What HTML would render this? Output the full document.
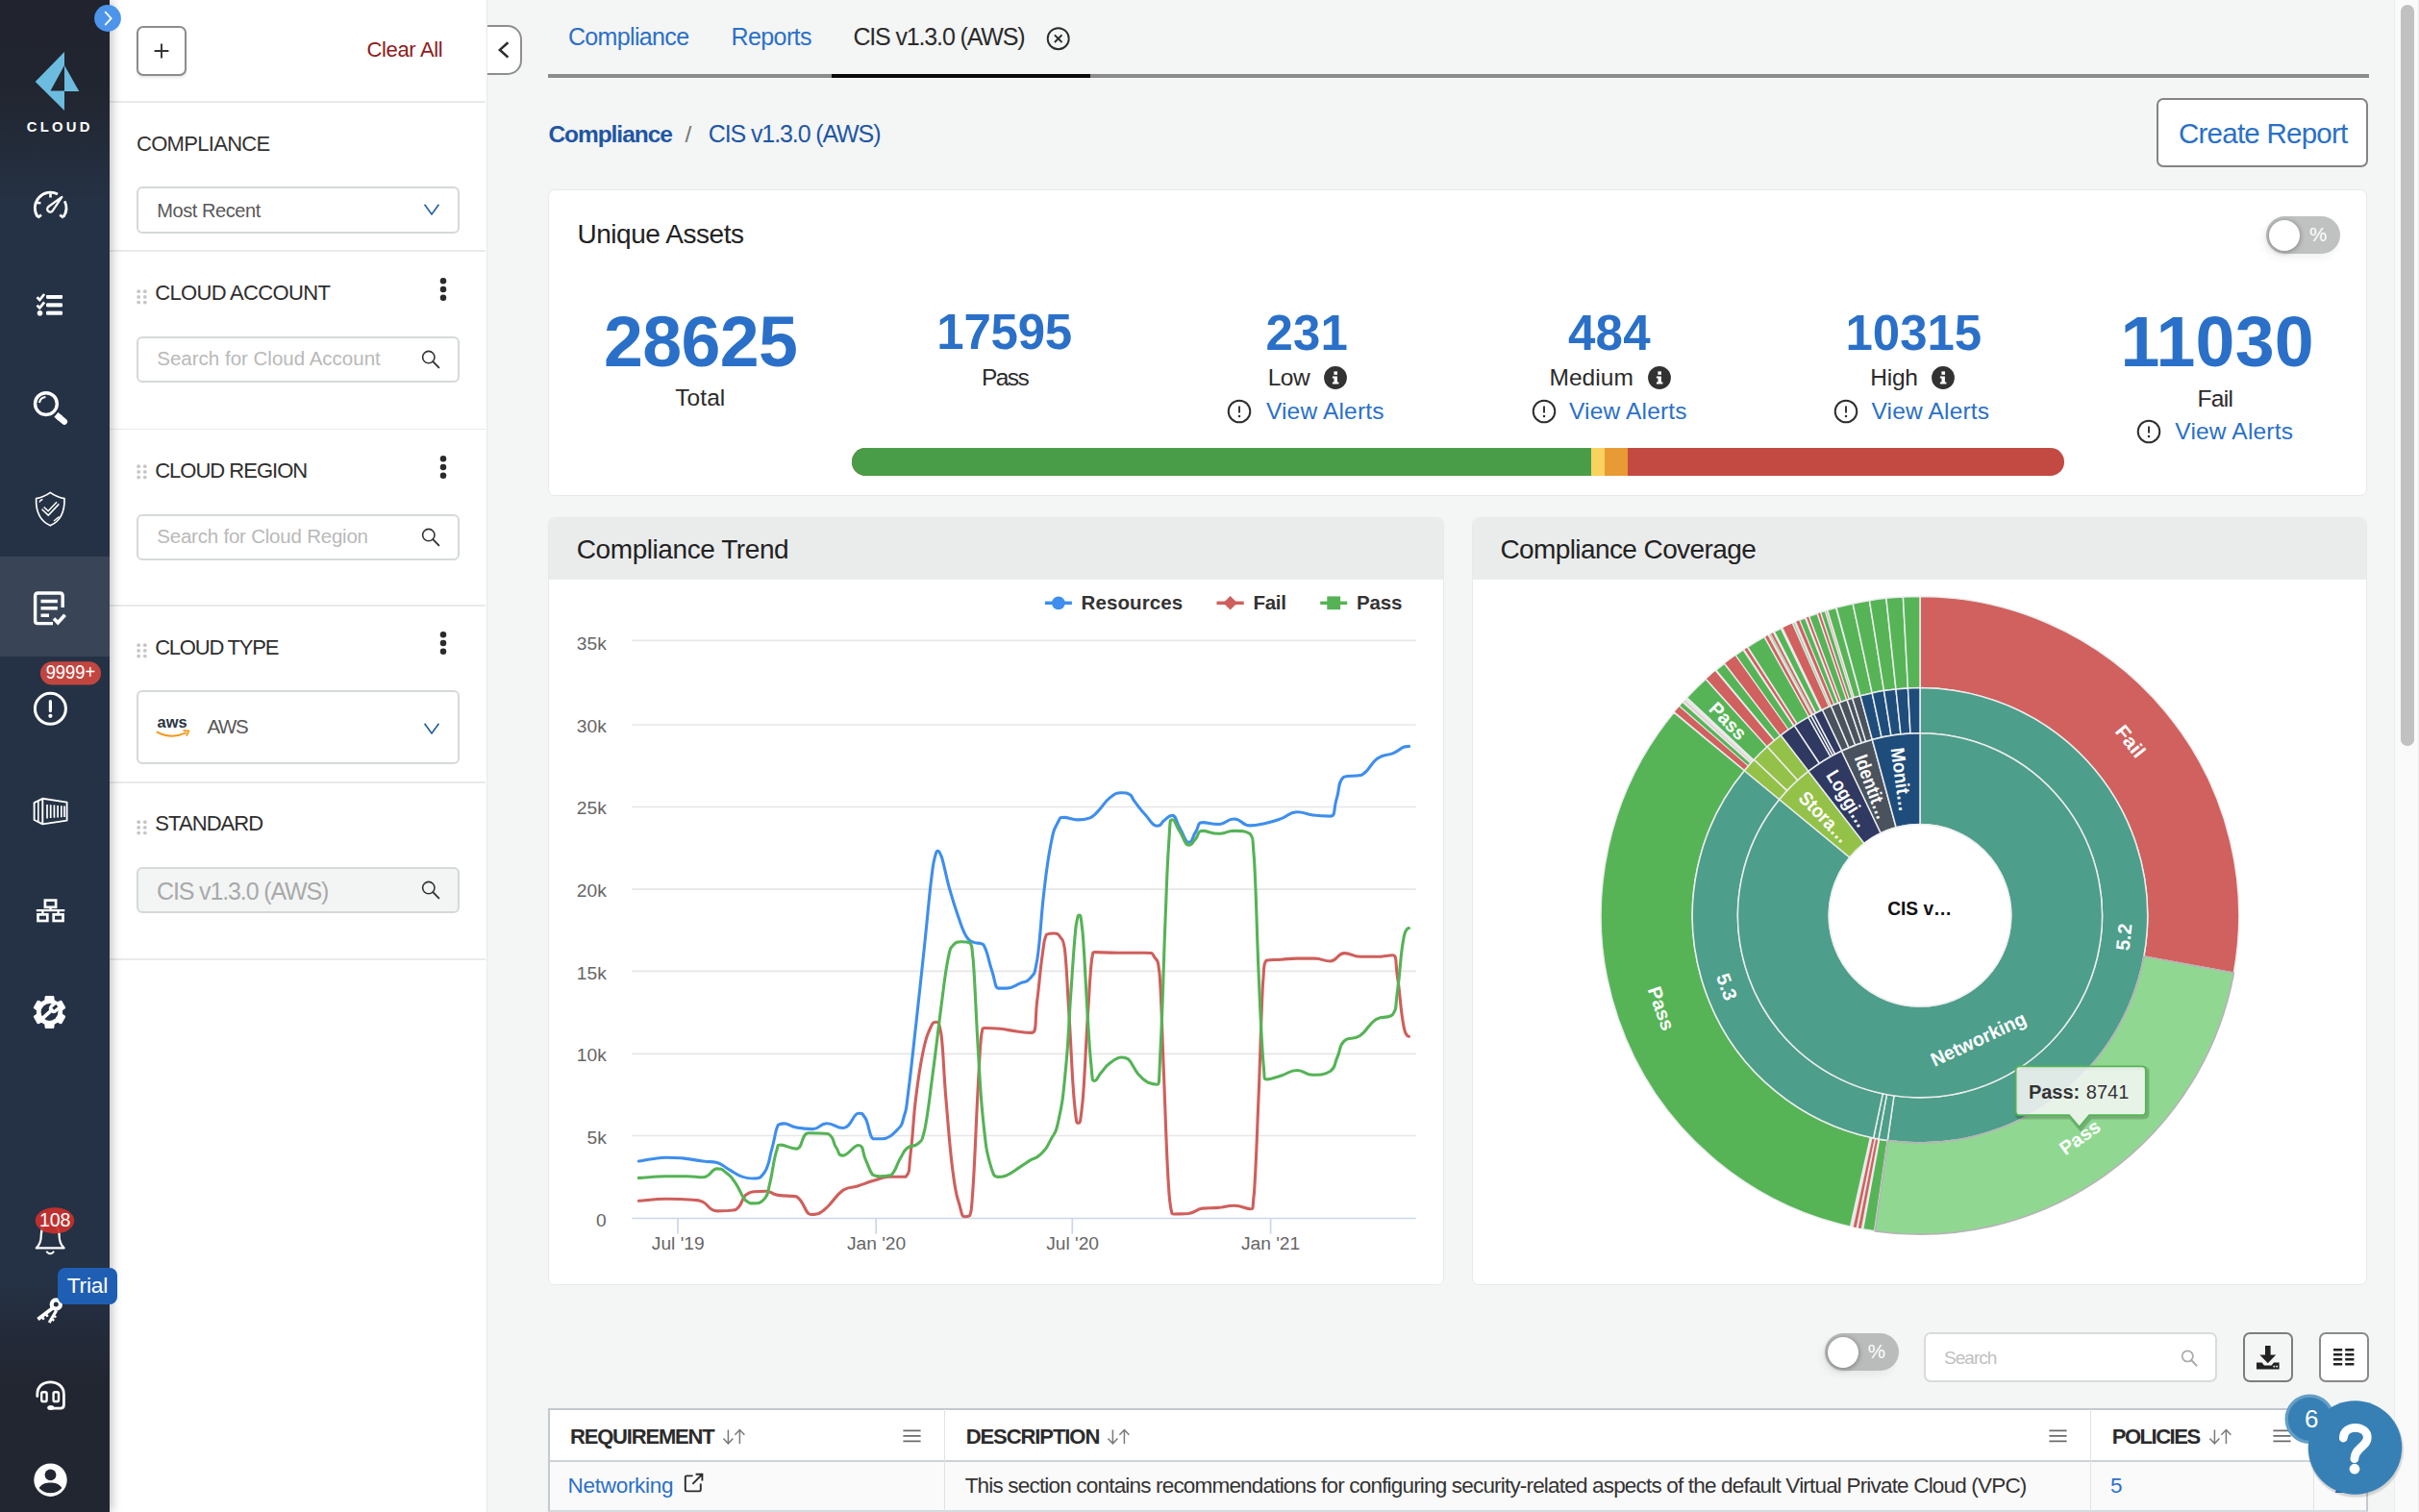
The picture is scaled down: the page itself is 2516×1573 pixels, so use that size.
<!DOCTYPE html>
<html><head><meta charset="utf-8"><title>Compliance</title>
<style>
html,body{margin:0;padding:0;}
body{width:2516px;height:1573px;overflow:hidden;background:#f4f5f5;font-family:"Liberation Sans",sans-serif;position:relative;}
#root{position:absolute;left:0;top:0;width:2516px;height:1573px;overflow:hidden;}
</style></head><body><div id="root">
<div style="position:absolute;left:0.00px;top:0.00px;width:113.60px;height:1573.00px;box-sizing:border-box;background:linear-gradient(180deg,#21242e 0px,#21252f 90px,#253245 215px,#253245 1330px,#232a39 1390px,#222631 1440px,#222631 100%);box-shadow:2px 0 10px rgba(0,0,0,0.27);z-index:5;"></div>
<div style="position:absolute;left:0.00px;top:578.50px;width:113.60px;height:104.50px;box-sizing:border-box;background:#394557;z-index:6;"></div>
<svg style="position:absolute;left:0.00px;top:0.00px;z-index:7;overflow:visible;" width="130" height="1573" viewBox="0 0 130 1573"><polygon points="67,54 36.7,85 67,115" fill="#6cbce0"/><polygon points="67,68 52.5,94.5 67,94.5" fill="#22262f"/><polygon points="67,68 82.3,95 67,95" fill="#6cbce0"/><text x="62.2" y="136.9" font-family="Liberation Sans, sans-serif" font-weight="bold" font-size="14.8" fill="#fff" text-anchor="middle" letter-spacing="3.3" textLength="69" lengthAdjust="spacing">CLOUD</text><g fill="none" stroke="#fff" stroke-width="2.8">
<path d="M39.25,225.75 A16.3,16.3 0 0 1 60.0,201.88"/>
<path d="M67.25,209.26 A16.3,16.3 0 0 1 65.95,225.75"/>
<path d="M39.2,226.4 L43,223.7 M66,226.4 L62.2,223.7" stroke-width="2.7"/>
<path d="M52.5,201.3 V205.5 M37.6,210.7 L42.4,211.2" stroke-width="2.6"/>
</g>
<path d="M64.4,204.9 L54.5,219.6 A3,3 0 1 1 50.1,215.2 Z" fill="none" stroke="#fff" stroke-width="2.3" stroke-linejoin="round"/><g stroke="#fff" stroke-width="3.8" fill="none" stroke-linecap="round">
<path d="M49.8,308.8 H63.3 M49.8,317.3 H63.3 M49.8,325.7 H63.3"/>
</g>
<path d="M48.3,306.9 H64.9 V310.7 H48.3 Z M48.3,315.4 H64.9 V319.2 H48.3 Z M48.3,323.8 H64.9 V327.6 H48.3 Z" fill="#fff" fill-opacity="0.85"/>
<g stroke="#fff" stroke-width="2.7" fill="none"><path d="M38.5,309.2 L41.3,312 L46.1,306 M38.5,317.6 L41.3,320.4 L46.1,314.4"/></g>
<circle cx="41.5" cy="325.7" r="2.8" fill="#fff"/><circle cx="47.9" cy="420.1" r="11.4" fill="none" stroke="#fff" stroke-width="3.4"/>
<path d="M58.4,431.3 L63,435.3" stroke="#fff" stroke-width="6.3"/>
<path d="M61.6,434.1 L66.9,438.7" stroke="#fff" stroke-width="6.3" stroke-linecap="round"/>
<path d="M41,419 A7.2,7.2 0 0 1 47.4,413" fill="none" stroke="#fff" stroke-width="2.1"/><path d="M52.3,512.4 C47,516.4 42.5,517.8 37.6,518.6 C37.2,531 40.5,541.5 52.3,546.8 C64.1,541.5 67.4,531 67,518.6 C62.1,517.8 57.6,516.4 52.3,512.4 Z" fill="none" stroke="#fff" stroke-width="1.7" stroke-linejoin="round"/>
<path d="M44.6,528.6 l5.6,5.3 l10,-10.6" fill="none" stroke="#fff" stroke-width="4.6" stroke-linejoin="miter"/>
<path d="M44.6,528.6 l5.6,5.3 l10,-10.6" fill="none" stroke="#253245" stroke-width="1.6"/>
<path d="M41,522.5 q0.5,-2.2 3.4,-3 M56,542 l5.5,-4.6" stroke="#fff" stroke-width="1.3" fill="none"/><path d="M55,648.6 H39.5 Q36.6,648.6 36.6,645.7 V620 Q36.6,617 39.5,617 H62.3 Q65.2,617 65.2,620 V632" fill="none" stroke="#fff" stroke-width="3.4"/>
<path d="M42.5,625.5 H59.8 M42.5,632.8 H59.8 M42.5,640.2 H51" stroke="#fff" stroke-width="3.6" fill="none"/>
<path d="M56,643.6 l4.2,4.2 l7.4,-8" fill="none" stroke="#fff" stroke-width="3.6"/><circle cx="52.4" cy="737.3" r="16" fill="none" stroke="#fff" stroke-width="3"/>
<path d="M52.4,729.6 V739.6" stroke="#fff" stroke-width="3.2" stroke-linecap="round"/><circle cx="52.4" cy="744.8" r="2.1" fill="#fff"/><rect x="42" y="688.2" width="63" height="24.4" rx="12.2" fill="#c2463f"/><text x="73.4" y="706.0" font-family="Liberation Sans, sans-serif" font-size="20" fill="#fff" text-anchor="middle" textLength="51.5" lengthAdjust="spacingAndGlyphs">9999+</text><g fill="none" stroke="#fff" stroke-width="1.9" stroke-linejoin="round">
<path d="M44.3,830.8 L69.6,834.6 V853.6 L44.3,857.4 L35.6,853 V835.2 Z"/>
<path d="M44.3,830.8 V857.4"/>
<path d="M39.8,833.6 V855.2" stroke-width="1.6"/>
<path d="M49,837 V851.4 M52.7,837.3 V851.1 M56.4,837.6 V850.8 M60.1,837.9 V850.5 M63.8,838.2 V850.2 M67,838.5 V849.9" stroke-width="1.7"/>
</g><g fill="none" stroke="#fff" stroke-width="2.7">
<rect x="46.9" y="936.6" width="11.2" height="7.2"/>
<rect x="39.5" y="951.4" width="9.8" height="6.6"/>
<rect x="55.7" y="951.4" width="9.8" height="6.6"/>
<path d="M52.5,944 V947.2 M37.8,947.2 H67.3" stroke-width="2.3"/>
<path d="M44.4,947.2 V950.6 M60.6,947.2 V950.6" stroke-width="2.3"/>
</g><path d="M47.86,1037.22 L55.14,1037.22 L55.60,1041.09 L59.77,1043.49 L63.35,1041.95 L66.99,1048.26 L63.87,1050.60 L63.87,1055.40 L66.99,1057.74 L63.35,1064.05 L59.77,1062.51 L55.60,1064.91 L55.14,1068.78 L47.86,1068.78 L47.40,1064.91 L43.23,1062.51 L39.65,1064.05 L36.01,1057.74 L39.13,1055.40 L39.13,1050.60 L36.01,1048.26 L39.65,1041.95 L43.23,1043.49 L47.40,1041.09 Z" fill="#fff" stroke="#fff" stroke-width="2.4" stroke-linejoin="round"/><circle cx="51.5" cy="1053.0" r="8.9" fill="#253245"/><g transform="rotate(48 51.5 1053.0)"><path d="M49.6,1063.0 V1051.8 A5,5 0 1 1 53.4,1051.8 V1063.0 Z" fill="#fff"/>
<rect x="50.0" y="1042.6" width="3" height="5.4" fill="#253245"/></g><g transform="translate(0,-4.4)"><path d="M37.8,1302.8 H66.6 C63,1299.6 61.6,1296 61.6,1289.5 C61.6,1281.6 57.8,1276.8 52.2,1276.8 C46.6,1276.8 42.8,1281.6 42.8,1289.5 C42.8,1296 41.4,1299.6 37.8,1302.8 Z" fill="none" stroke="#fff" stroke-width="2.2" stroke-linejoin="round"/>
<path d="M48.2,1306.3 Q52.2,1311 56.2,1306.3" fill="none" stroke="#fff" stroke-width="2"/></g><ellipse cx="57" cy="1269.8" rx="20.2" ry="13.6" fill="#c9302c" fill-opacity="0.93"/><text x="57.2" y="1275.9" font-family="Liberation Sans, sans-serif" font-size="21" fill="#fff" text-anchor="middle" textLength="32.6" lengthAdjust="spacingAndGlyphs">108</text><g fill="none" stroke="#fff">
<circle cx="58.3" cy="1357" r="4.6" stroke-width="4.2"/>
<path d="M54.2,1361.2 L39.4,1372.4" stroke-width="3.8"/>
<path d="M43.5,1369.8 l2.2,3 M47.5,1366.7 l2.2,3" stroke-width="2.6"/>
<path d="M58.6,1363.5 L51.2,1376" stroke-width="3.2"/>
<path d="M53.6,1372.2 l2.8,1.6 M55.6,1368.8 l2.8,1.6" stroke-width="2.2"/>
</g><g fill="none" stroke="#fff" stroke-width="2.8" stroke-linecap="round" stroke-linejoin="round">
<path d="M38.8,1452.5 V1450.4 C38.8,1442.4 44.7,1437.8 52.3,1437.8 C59.9,1437.8 66.4,1442.4 66.4,1450.4 V1461.6 Q66.4,1465.2 62.8,1465.2 H55.5"/>
<rect x="43.2" y="1448.2" width="5.4" height="9.8" rx="1.6" stroke-width="2.4"/>
<rect x="55.6" y="1448.2" width="5.4" height="9.8" rx="1.6" stroke-width="2.4"/>
</g><ellipse cx="52.8" cy="1464.6" rx="3.6" ry="2.5" fill="#fff"/><circle cx="52.5" cy="1539.7" r="17.2" fill="#fff"/>
<circle cx="52.5" cy="1534.3" r="5.9" fill="#222631"/>
<path d="M40.6,1547.9 C43.5,1543.2 48,1542.4 52.5,1542.4 C57,1542.4 61.5,1543.2 64.4,1547.9 C61.4,1551.4 57.3,1553.2 52.5,1553.2 C47.7,1553.2 43.6,1551.4 40.6,1547.9 Z" fill="#222631"/></svg>
<div style="position:absolute;left:59.50px;top:1319.30px;width:62.50px;height:38.20px;box-sizing:border-box;background:#1f5fb3;border-radius:8px;z-index:8;"></div>
<div style="position:absolute;top:1325.50px;font-size:22.8px;line-height:22.8px;color:#fff;white-space:nowrap;letter-spacing:-0.197px;left:69.65px;z-index:9;">Trial</div>
<svg style="position:absolute;left:97.00px;top:4.00px;z-index:9;" width="30" height="30" viewBox="0 0 30 30"><circle cx="15" cy="15" r="13.9" fill="#4c95ea"/><path d="M12.2,8.2 L18.6,15.2 L12.2,22.2" fill="none" stroke="#fff" stroke-width="1.8"/></svg>
<div style="position:absolute;left:114.00px;top:0.00px;width:392.90px;height:1573.00px;box-sizing:border-box;background:#fff;border-right:1.9px solid #e7e9e9;z-index:1;"></div>
<div style="position:absolute;left:114.00px;top:105.10px;width:391.00px;height:1.80px;box-sizing:border-box;background:#e9ebeb;z-index:2;"></div>
<div style="position:absolute;left:114.00px;top:260.40px;width:391.00px;height:1.80px;box-sizing:border-box;background:#e9ebeb;z-index:2;"></div>
<div style="position:absolute;left:114.00px;top:445.60px;width:391.00px;height:1.80px;box-sizing:border-box;background:#e9ebeb;z-index:2;"></div>
<div style="position:absolute;left:114.00px;top:628.80px;width:391.00px;height:1.80px;box-sizing:border-box;background:#e9ebeb;z-index:2;"></div>
<div style="position:absolute;left:114.00px;top:813.00px;width:391.00px;height:1.80px;box-sizing:border-box;background:#e9ebeb;z-index:2;"></div>
<div style="position:absolute;left:114.00px;top:997.10px;width:391.00px;height:1.80px;box-sizing:border-box;background:#e9ebeb;z-index:2;"></div>
<div style="position:absolute;left:141.90px;top:26.50px;width:51.80px;height:52.00px;box-sizing:border-box;border:2px solid #8c8c8c;border-radius:7px;background:#fff;box-shadow:0 2px 3px rgba(0,0,0,0.10);z-index:3;"></div>
<svg style="position:absolute;left:160.00px;top:45.00px;z-index:3;" width="16" height="16" viewBox="0 0 16 16"><path d="M8,0.6 V15.4 M0.6,8 H15.4" stroke="#333" stroke-width="1.9"/></svg>
<div style="position:absolute;top:40.90px;font-size:22px;line-height:22px;color:#8e1b1b;white-space:nowrap;letter-spacing:-0.325px;left:381.40px;z-index:3;">Clear All</div>
<div style="position:absolute;top:138.50px;font-size:22px;line-height:22px;color:#333;white-space:nowrap;letter-spacing:-0.697px;left:142.00px;z-index:3;">COMPLIANCE</div>
<div style="position:absolute;left:141.80px;top:194.30px;width:336.70px;height:48.40px;box-sizing:border-box;border:2px solid #d5d9d9;border-radius:6px;background:#fff;z-index:3;"></div>
<div style="position:absolute;top:208.60px;font-size:20px;line-height:20px;color:#585858;white-space:nowrap;letter-spacing:-0.424px;left:163.30px;z-index:3;">Most Recent</div>
<svg style="position:absolute;left:440.20px;top:211.40px;z-index:3;" width="18" height="14" viewBox="0 0 18 14"><path d="M1.6,1.8 L9,12 L16.4,1.8" fill="none" stroke="#1f5aa8" stroke-width="1.6"/></svg>
<svg style="position:absolute;left:141.60px;top:300.60px;z-index:3;" width="12" height="16" viewBox="0 0 12 16"><circle cx="2.2" cy="2.2" r="1.9" fill="#c6c6c6"/><circle cx="2.2" cy="7.9" r="1.9" fill="#c6c6c6"/><circle cx="2.2" cy="13.600000000000001" r="1.9" fill="#c6c6c6"/><circle cx="8.8" cy="2.2" r="1.9" fill="#c6c6c6"/><circle cx="8.8" cy="7.9" r="1.9" fill="#c6c6c6"/><circle cx="8.8" cy="13.600000000000001" r="1.9" fill="#c6c6c6"/></svg>
<div style="position:absolute;top:294.10px;font-size:22px;line-height:22px;color:#2e2e2e;white-space:nowrap;letter-spacing:-0.668px;left:161.20px;z-index:3;">CLOUD ACCOUNT</div>
<svg style="position:absolute;left:456.20px;top:286.70px;z-index:3;" width="10" height="28" viewBox="0 0 10 28"><circle cx="5" cy="5.2" r="3.25" fill="#2b2b2b"/><circle cx="5" cy="14" r="3.25" fill="#2b2b2b"/><circle cx="5" cy="22.8" r="3.25" fill="#2b2b2b"/></svg>
<div style="position:absolute;left:141.80px;top:349.90px;width:336.70px;height:48.20px;box-sizing:border-box;border:2px solid #d5d9d9;border-radius:6px;background:#fff;z-index:3;"></div>
<div style="position:absolute;top:363.35px;font-size:20.5px;line-height:20.5px;color:#b9b9b9;white-space:nowrap;left:163.30px;z-index:3;">Search for Cloud Account</div>
<svg style="position:absolute;left:436.50px;top:362.60px;z-index:3;" width="22" height="22" viewBox="0 0 22 22"><circle cx="8.8" cy="8.6" r="6.2" fill="none" stroke="#333" stroke-width="1.6"/><path d="M13.3,13.2 L19.4,19.4" stroke="#333" stroke-width="1.9" stroke-linecap="round"/></svg>
<svg style="position:absolute;left:141.60px;top:483.00px;z-index:3;" width="12" height="16" viewBox="0 0 12 16"><circle cx="2.2" cy="2.2" r="1.9" fill="#c6c6c6"/><circle cx="2.2" cy="7.9" r="1.9" fill="#c6c6c6"/><circle cx="2.2" cy="13.600000000000001" r="1.9" fill="#c6c6c6"/><circle cx="8.8" cy="2.2" r="1.9" fill="#c6c6c6"/><circle cx="8.8" cy="7.9" r="1.9" fill="#c6c6c6"/><circle cx="8.8" cy="13.600000000000001" r="1.9" fill="#c6c6c6"/></svg>
<div style="position:absolute;top:479.30px;font-size:22px;line-height:22px;color:#2e2e2e;white-space:nowrap;letter-spacing:-0.993px;left:161.20px;z-index:3;">CLOUD REGION</div>
<svg style="position:absolute;left:456.20px;top:471.70px;z-index:3;" width="10" height="28" viewBox="0 0 10 28"><circle cx="5" cy="5.2" r="3.25" fill="#2b2b2b"/><circle cx="5" cy="14" r="3.25" fill="#2b2b2b"/><circle cx="5" cy="22.8" r="3.25" fill="#2b2b2b"/></svg>
<div style="position:absolute;left:141.80px;top:535.10px;width:336.70px;height:48.40px;box-sizing:border-box;border:2px solid #d5d9d9;border-radius:6px;background:#fff;z-index:3;"></div>
<div style="position:absolute;top:548.45px;font-size:20.5px;line-height:20.5px;color:#b9b9b9;white-space:nowrap;letter-spacing:-0.217px;left:163.30px;z-index:3;">Search for Cloud Region</div>
<svg style="position:absolute;left:436.50px;top:547.70px;z-index:3;" width="22" height="22" viewBox="0 0 22 22"><circle cx="8.8" cy="8.6" r="6.2" fill="none" stroke="#333" stroke-width="1.6"/><path d="M13.3,13.2 L19.4,19.4" stroke="#333" stroke-width="1.9" stroke-linecap="round"/></svg>
<svg style="position:absolute;left:141.60px;top:669.20px;z-index:3;" width="12" height="16" viewBox="0 0 12 16"><circle cx="2.2" cy="2.2" r="1.9" fill="#c6c6c6"/><circle cx="2.2" cy="7.9" r="1.9" fill="#c6c6c6"/><circle cx="2.2" cy="13.600000000000001" r="1.9" fill="#c6c6c6"/><circle cx="8.8" cy="2.2" r="1.9" fill="#c6c6c6"/><circle cx="8.8" cy="7.9" r="1.9" fill="#c6c6c6"/><circle cx="8.8" cy="13.600000000000001" r="1.9" fill="#c6c6c6"/></svg>
<div style="position:absolute;top:662.70px;font-size:22px;line-height:22px;color:#2e2e2e;white-space:nowrap;letter-spacing:-1.219px;left:161.20px;z-index:3;">CLOUD TYPE</div>
<svg style="position:absolute;left:456.20px;top:655.40px;z-index:3;" width="10" height="28" viewBox="0 0 10 28"><circle cx="5" cy="5.2" r="3.25" fill="#2b2b2b"/><circle cx="5" cy="14" r="3.25" fill="#2b2b2b"/><circle cx="5" cy="22.8" r="3.25" fill="#2b2b2b"/></svg>
<div style="position:absolute;left:141.80px;top:718.40px;width:336.70px;height:76.40px;box-sizing:border-box;border:2px solid #d5d9d9;border-radius:6px;background:#fff;z-index:3;"></div>
<svg style="position:absolute;left:160.00px;top:742.00px;z-index:3;" width="42" height="28" viewBox="0 0 42 28"><text x="3.6" y="14.6" font-family="Liberation Sans, sans-serif" font-weight="bold" font-size="16.6" fill="#2b3442" textLength="31" lengthAdjust="spacingAndGlyphs">aws</text><path d="M3.6,19.6 Q18,27.6 33.2,20.4" fill="none" stroke="#f39a1f" stroke-width="2" stroke-linecap="round"/><path d="M31.2,18.2 L36.6,18.4 L34.2,23" fill="none" stroke="#f39a1f" stroke-width="1.7" stroke-linejoin="round" stroke-linecap="round"/></svg>
<div style="position:absolute;top:746.05px;font-size:20.5px;line-height:20.5px;color:#585858;white-space:nowrap;letter-spacing:-1.379px;left:215.40px;z-index:3;">AWS</div>
<svg style="position:absolute;left:440.30px;top:750.90px;z-index:3;" width="18" height="14" viewBox="0 0 18 14"><path d="M1.6,1.8 L9,12 L16.4,1.8" fill="none" stroke="#1f5aa8" stroke-width="1.6"/></svg>
<svg style="position:absolute;left:141.60px;top:852.80px;z-index:3;" width="12" height="16" viewBox="0 0 12 16"><circle cx="2.2" cy="2.2" r="1.9" fill="#c6c6c6"/><circle cx="2.2" cy="7.9" r="1.9" fill="#c6c6c6"/><circle cx="2.2" cy="13.600000000000001" r="1.9" fill="#c6c6c6"/><circle cx="8.8" cy="2.2" r="1.9" fill="#c6c6c6"/><circle cx="8.8" cy="7.9" r="1.9" fill="#c6c6c6"/><circle cx="8.8" cy="13.600000000000001" r="1.9" fill="#c6c6c6"/></svg>
<div style="position:absolute;top:846.30px;font-size:22px;line-height:22px;color:#2e2e2e;white-space:nowrap;letter-spacing:-0.923px;left:161.30px;z-index:3;">STANDARD</div>
<div style="position:absolute;left:141.80px;top:902.30px;width:336.70px;height:48.20px;box-sizing:border-box;border:2px solid #d5d9d9;border-radius:6px;background:#f3f5f5;z-index:3;"></div>
<div style="position:absolute;top:914.50px;font-size:25px;line-height:25px;color:#a9a9a9;white-space:nowrap;letter-spacing:-1.128px;left:163.00px;z-index:3;">CIS v1.3.0 (AWS)</div>
<svg style="position:absolute;left:436.50px;top:915.20px;z-index:3;" width="22" height="22" viewBox="0 0 22 22"><circle cx="8.8" cy="8.6" r="6.2" fill="none" stroke="#333" stroke-width="1.6"/><path d="M13.3,13.2 L19.4,19.4" stroke="#333" stroke-width="1.9" stroke-linecap="round"/></svg>
<div style="position:absolute;left:506.60px;top:26.40px;width:36.40px;height:51.60px;box-sizing:border-box;background:#fff;border:2px solid #8e8e8e;border-left:none;border-radius:0 15px 15px 0;z-index:2;"></div>
<svg style="position:absolute;left:515.00px;top:42.00px;z-index:3;" width="16" height="20" viewBox="0 0 16 20"><path d="M13.4,2.2 L4.9,9.9 L13.4,17.6" fill="none" stroke="#2e2e2e" stroke-width="2.6" stroke-linejoin="miter"/></svg>
<div style="position:absolute;top:26.20px;font-size:25px;line-height:25px;color:#2a70c8;white-space:nowrap;letter-spacing:-0.641px;left:590.90px;">Compliance</div>
<div style="position:absolute;top:26.20px;font-size:25px;line-height:25px;color:#2a70c8;white-space:nowrap;letter-spacing:-0.620px;left:760.60px;">Reports</div>
<div style="position:absolute;top:26.20px;font-size:25px;line-height:25px;color:#2b2b2b;white-space:nowrap;letter-spacing:-1.146px;left:887.40px;">CIS v1.3.0 (AWS)</div>
<svg style="position:absolute;left:1087.00px;top:27.00px;" width="28" height="28" viewBox="0 0 28 28"><circle cx="13.7" cy="13.2" r="11" fill="none" stroke="#2b2b2b" stroke-width="1.9"/><path d="M9.9,9.4 L17.5,17 M17.5,9.4 L9.9,17" stroke="#2b2b2b" stroke-width="1.9"/></svg>
<div style="position:absolute;left:569.60px;top:77.40px;width:1894.00px;height:3.20px;box-sizing:border-box;background:#8b8b8b;"></div>
<div style="position:absolute;left:864.80px;top:76.60px;width:269.60px;height:4.20px;box-sizing:border-box;background:#0a0a0a;"></div>
<div style="position:absolute;top:127.85px;font-size:24.5px;line-height:24.5px;color:#1f57a4;white-space:nowrap;font-weight:bold;letter-spacing:-1.047px;left:570.40px;">Compliance</div>
<div style="position:absolute;top:127.85px;font-size:24.5px;line-height:24.5px;color:#777;white-space:nowrap;left:712.40px;">/</div>
<div style="position:absolute;top:127.10px;font-size:25px;line-height:25px;color:#1f57a4;white-space:nowrap;letter-spacing:-1.109px;left:736.80px;">CIS v1.3.0 (AWS)</div>
<div style="position:absolute;left:2243.20px;top:101.50px;width:220.20px;height:72.80px;box-sizing:border-box;background:#fff;border:2px solid #848484;border-radius:7px;"></div>
<div style="position:absolute;top:123.65px;font-size:29.5px;line-height:29.5px;color:#2a70c8;white-space:nowrap;letter-spacing:-0.753px;left:2266.00px;">Create Report</div>
<div style="position:absolute;left:570.40px;top:196.60px;width:1891.80px;height:319.20px;box-sizing:border-box;background:#fff;border:1.6px solid #e7eaea;border-radius:7px;"></div>
<div style="position:absolute;top:229.70px;font-size:28px;line-height:28px;color:#222;white-space:nowrap;letter-spacing:-0.446px;left:600.40px;">Unique Assets</div>
<div style="position:absolute;left:2356.90px;top:225.00px;width:77.00px;height:39.00px;box-sizing:border-box;background:#c0c2c2;border-radius:19.5px;box-shadow:-3px 5px 8px rgba(0,0,0,0.05);"></div>
<div style="position:absolute;left:2360.20px;top:228.50px;width:32.00px;height:32.00px;box-sizing:border-box;background:#fff;border-radius:50%;box-shadow:0 1px 5px 1px rgba(0,0,0,0.28);"></div>
<div style="position:absolute;top:234.25px;font-size:20.5px;line-height:20.5px;color:#fff;white-space:nowrap;left:2401.99px;">%</div>
<div style="position:absolute;top:318.75px;font-size:73.5px;line-height:73.5px;color:#2a70c8;white-space:nowrap;font-weight:bold;letter-spacing:-0.679px;left:628.10px;">28625</div>
<div style="position:absolute;top:401.55px;font-size:24.5px;line-height:24.5px;color:#2b2b2b;white-space:nowrap;letter-spacing:0.050px;left:702.30px;">Total</div>
<div style="position:absolute;top:320.30px;font-size:51px;line-height:51px;color:#2a70c8;white-space:nowrap;font-weight:bold;letter-spacing:-0.245px;left:974.30px;">17595</div>
<div style="position:absolute;top:381.05px;font-size:24.5px;line-height:24.5px;color:#2b2b2b;white-space:nowrap;letter-spacing:-1.600px;left:1021.00px;">Pass</div>
<div style="position:absolute;top:320.70px;font-size:51px;line-height:51px;color:#2a70c8;white-space:nowrap;font-weight:bold;letter-spacing:0.102px;left:1316.50px;">231</div>
<div style="position:absolute;top:381.25px;font-size:24.5px;line-height:24.5px;color:#2b2b2b;white-space:nowrap;letter-spacing:-0.582px;left:1318.80px;">Low</div>
<svg style="position:absolute;left:1375.80px;top:380.20px;" width="26" height="26" viewBox="0 0 26 26"><circle cx="13" cy="13" r="11.9" fill="#323232"/><rect x="11.4" y="6.4" width="3.6" height="3.4" fill="#fff"/><path d="M9.9,11.4 H14.9 V17.6 H16.4 V19.6 H9.9 V17.6 H11.5 V13.4 H9.9 Z" fill="#fff"/></svg>
<svg style="position:absolute;left:1276.30px;top:414.70px;" width="26" height="26" viewBox="0 0 26 26"><circle cx="13" cy="13" r="11.3" fill="none" stroke="#2e2e2e" stroke-width="2"/><path d="M13,7.4 V14.6" stroke="#2e2e2e" stroke-width="1.9"/><circle cx="13" cy="17.9" r="1.25" fill="#2e2e2e"/></svg>
<div style="position:absolute;top:416.15px;font-size:24.5px;line-height:24.5px;color:#2a70c8;white-space:nowrap;letter-spacing:0.187px;left:1316.90px;">View Alerts</div>
<div style="position:absolute;top:320.70px;font-size:51px;line-height:51px;color:#2a70c8;white-space:nowrap;font-weight:bold;letter-spacing:0.302px;left:1630.90px;">484</div>
<div style="position:absolute;top:381.25px;font-size:24.5px;line-height:24.5px;color:#2b2b2b;white-space:nowrap;letter-spacing:0.043px;left:1611.50px;">Medium</div>
<svg style="position:absolute;left:1713.20px;top:380.20px;" width="26" height="26" viewBox="0 0 26 26"><circle cx="13" cy="13" r="11.9" fill="#323232"/><rect x="11.4" y="6.4" width="3.6" height="3.4" fill="#fff"/><path d="M9.9,11.4 H14.9 V17.6 H16.4 V19.6 H9.9 V17.6 H11.5 V13.4 H9.9 Z" fill="#fff"/></svg>
<svg style="position:absolute;left:1592.70px;top:414.70px;" width="26" height="26" viewBox="0 0 26 26"><circle cx="13" cy="13" r="11.3" fill="none" stroke="#2e2e2e" stroke-width="2"/><path d="M13,7.4 V14.6" stroke="#2e2e2e" stroke-width="1.9"/><circle cx="13" cy="17.9" r="1.25" fill="#2e2e2e"/></svg>
<div style="position:absolute;top:416.15px;font-size:24.5px;line-height:24.5px;color:#2a70c8;white-space:nowrap;letter-spacing:0.187px;left:1632.00px;">View Alerts</div>
<div style="position:absolute;top:320.60px;font-size:51px;line-height:51px;color:#2a70c8;white-space:nowrap;font-weight:bold;letter-spacing:-0.085px;left:1919.60px;">10315</div>
<div style="position:absolute;top:381.25px;font-size:24.5px;line-height:24.5px;color:#2b2b2b;white-space:nowrap;letter-spacing:-0.197px;left:1945.20px;">High</div>
<svg style="position:absolute;left:2008.40px;top:380.20px;" width="26" height="26" viewBox="0 0 26 26"><circle cx="13" cy="13" r="11.9" fill="#323232"/><rect x="11.4" y="6.4" width="3.6" height="3.4" fill="#fff"/><path d="M9.9,11.4 H14.9 V17.6 H16.4 V19.6 H9.9 V17.6 H11.5 V13.4 H9.9 Z" fill="#fff"/></svg>
<svg style="position:absolute;left:1906.60px;top:414.70px;" width="26" height="26" viewBox="0 0 26 26"><circle cx="13" cy="13" r="11.3" fill="none" stroke="#2e2e2e" stroke-width="2"/><path d="M13,7.4 V14.6" stroke="#2e2e2e" stroke-width="1.9"/><circle cx="13" cy="17.9" r="1.25" fill="#2e2e2e"/></svg>
<div style="position:absolute;top:416.15px;font-size:24.5px;line-height:24.5px;color:#2a70c8;white-space:nowrap;letter-spacing:0.187px;left:1946.50px;">View Alerts</div>
<div style="position:absolute;top:318.65px;font-size:73.5px;line-height:73.5px;color:#2a70c8;white-space:nowrap;font-weight:bold;letter-spacing:0.232px;left:2205.45px;">11030</div>
<div style="position:absolute;top:403.25px;font-size:24.5px;line-height:24.5px;color:#2b2b2b;white-space:nowrap;letter-spacing:-0.620px;left:2285.40px;">Fail</div>
<svg style="position:absolute;left:2221.60px;top:436.00px;" width="26" height="26" viewBox="0 0 26 26"><circle cx="13" cy="13" r="11.3" fill="none" stroke="#2e2e2e" stroke-width="2"/><path d="M13,7.4 V14.6" stroke="#2e2e2e" stroke-width="1.9"/><circle cx="13" cy="17.9" r="1.25" fill="#2e2e2e"/></svg>
<div style="position:absolute;top:437.15px;font-size:24.5px;line-height:24.5px;color:#2a70c8;white-space:nowrap;letter-spacing:0.187px;left:2262.30px;">View Alerts</div>
<div style="position:absolute;left:886.00px;top:466.40px;width:1260.80px;height:28.30px;box-sizing:border-box;border-radius:14.2px;overflow:hidden;background:#c34a42;"><div style="position:absolute;left:0;top:0;height:100%;width:768.6px;background:#4a9d48;"></div><div style="position:absolute;left:768.6px;top:0;height:100%;width:14.2px;background:#fad25f;"></div><div style="position:absolute;left:782.8px;top:0;height:100%;width:24.2px;background:#e89a34;"></div></div>
<div style="position:absolute;left:2490.20px;top:0.00px;width:25.80px;height:1573.00px;box-sizing:border-box;background:#fafafa;border-left:1.6px solid #eceded;border-right:1.8px solid #eeeeee;z-index:20;"></div>
<div style="position:absolute;left:2497.00px;top:5.00px;width:13.60px;height:770.50px;box-sizing:border-box;background:#c1c1c1;border-radius:6.8px;z-index:21;"></div>
<div style="position:absolute;left:570.20px;top:538.00px;width:932.00px;height:798.60px;box-sizing:border-box;background:#fff;border:1.6px solid #e7eaea;border-radius:7px;overflow:hidden;"><div style="position:absolute;left:0;top:0;right:0;height:64.2px;background:#eaecec;"></div></div>
<div style="position:absolute;top:558.10px;font-size:28px;line-height:28px;color:#222;white-space:nowrap;letter-spacing:-0.427px;left:599.80px;">Compliance Trend</div>
<svg style="position:absolute;left:0.00px;top:0.00px;pointer-events:none;" width="2516" height="1573" viewBox="0 0 2516 1573"><path d="M657.4,1181.50 H1472.6" stroke="#e6e6e6" stroke-width="1.7"/><path d="M657.4,1096.40 H1472.6" stroke="#e6e6e6" stroke-width="1.7"/><path d="M657.4,1010.30 H1472.6" stroke="#e6e6e6" stroke-width="1.7"/><path d="M657.4,925.10 H1472.6" stroke="#e6e6e6" stroke-width="1.7"/><path d="M657.4,839.50 H1472.6" stroke="#e6e6e6" stroke-width="1.7"/><path d="M657.4,754.00 H1472.6" stroke="#e6e6e6" stroke-width="1.7"/><path d="M657.4,666.35 H1472.6" stroke="#e6e6e6" stroke-width="1.7"/><path d="M657.4,1267.50 H1472.6" stroke="#ccd6eb" stroke-width="1.7"/><path d="M705.0,1267.50 V1283.70" stroke="#ccd6eb" stroke-width="1.7"/><path d="M911.2,1267.50 V1283.70" stroke="#ccd6eb" stroke-width="1.7"/><path d="M1115.3,1267.50 V1283.70" stroke="#ccd6eb" stroke-width="1.7"/><path d="M1321.6,1267.50 V1283.70" stroke="#ccd6eb" stroke-width="1.7"/><path d="M664.3,1208.0 C667.8,1208.0 671.0,1206.7 678.1,1205.7 C685.2,1204.8 685.0,1204.2 692.9,1204.2 C700.8,1204.2 700.3,1204.2 709.8,1204.9 C719.3,1205.9 722.0,1206.8 731.0,1208.0 C740.0,1209.2 738.9,1208.0 745.8,1209.5 C752.7,1211.7 752.1,1213.3 758.5,1216.9 C764.9,1220.5 764.9,1221.6 771.2,1223.9 C777.6,1226.0 777.8,1226.0 783.9,1226.0 C790.0,1226.0 790.8,1226.0 795.6,1219.0 C800.4,1211.2 799.6,1206.8 803.0,1194.7 C806.4,1182.6 806.1,1176.9 809.3,1170.4 C812.5,1168.9 810.9,1168.9 815.7,1168.9 C820.5,1168.9 821.0,1171.7 828.4,1173.1 C835.8,1174.5 837.4,1174.6 845.3,1174.6 C853.2,1174.6 852.2,1168.7 860.1,1168.7 C868.0,1168.7 868.8,1173.5 877.0,1173.5 C885.2,1173.5 887.1,1158.3 892.9,1158.3 C898.6,1158.3 896.0,1158.3 900.0,1163.1 C904.0,1169.7 904.4,1184.8 908.8,1184.8 C913.2,1184.8 911.4,1184.8 917.5,1184.8 C923.6,1184.8 927.5,1181.3 933.3,1175.3 C939.0,1169.3 937.6,1170.8 940.5,1160.8 C943.4,1150.8 941.7,1159.6 944.8,1135.4 C947.9,1111.2 948.7,1102.0 952.9,1064.2 C957.1,1026.4 957.6,1020.9 961.5,984.3 C965.4,947.7 965.6,940.9 968.3,917.7 C971.0,894.5 970.6,899.6 972.4,891.5 C974.2,885.4 973.9,885.4 975.6,885.4 C977.4,885.4 976.4,885.4 979.4,891.5 C982.4,901.3 983.4,909.4 987.6,924.7 C991.9,940.0 992.0,940.3 996.4,952.8 C1000.8,965.2 1001.2,967.7 1005.2,974.5 C1009.2,980.1 1007.8,978.1 1012.2,980.1 C1016.6,982.1 1017.9,980.1 1022.7,982.6 C1027.5,989.8 1027.5,997.5 1031.4,1008.9 C1035.4,1020.3 1034.5,1028.1 1038.5,1028.1 C1042.5,1028.1 1041.5,1028.1 1047.2,1028.1 C1052.9,1028.1 1055.1,1025.5 1061.2,1022.9 C1067.3,1020.3 1067.3,1022.9 1071.7,1017.6 C1076.1,1011.5 1075.3,1017.6 1078.8,998.3 C1082.3,975.9 1082.3,958.0 1085.8,928.2 C1089.3,898.4 1089.3,897.2 1092.8,879.2 C1096.3,861.2 1096.3,863.6 1099.8,856.4 C1103.3,850.4 1101.5,850.4 1106.8,850.4 C1112.0,850.4 1114.2,852.9 1120.8,852.9 C1127.4,852.9 1127.8,852.9 1133.1,851.1 C1138.4,848.9 1136.7,849.4 1141.9,844.1 C1147.2,838.9 1148.0,834.9 1154.1,830.1 C1160.2,825.3 1161.2,824.8 1166.4,824.8 C1171.7,824.8 1171.7,824.8 1175.1,826.6 C1178.5,828.8 1176.0,828.4 1180.0,833.6 C1184.0,838.8 1185.0,840.9 1190.9,847.3 C1196.8,853.7 1198.6,859.3 1203.6,859.3 C1208.6,859.3 1207.0,856.2 1210.9,853.5 C1214.8,850.8 1215.2,848.4 1219.3,848.4 C1223.4,848.4 1223.0,854.8 1227.3,861.8 C1231.6,868.8 1232.3,876.4 1236.4,876.4 C1240.5,876.4 1240.0,870.7 1243.6,865.5 C1247.2,860.3 1245.0,855.6 1250.9,855.6 C1256.8,855.6 1259.1,857.5 1267.3,857.5 C1275.5,857.5 1275.4,852.0 1283.6,852.0 C1291.8,852.0 1291.8,858.9 1300.0,858.9 C1308.2,858.9 1308.2,858.2 1316.4,856.4 C1324.6,854.6 1324.5,854.5 1332.7,851.6 C1340.9,848.7 1340.9,844.7 1349.1,844.7 C1357.3,844.7 1356.9,846.9 1365.5,848.0 C1374.1,849.1 1377.4,849.1 1383.6,849.1 C1389.8,849.1 1386.7,841.1 1390.2,830.9 C1393.7,820.7 1391.0,814.6 1397.5,808.4 C1404.0,806.2 1407.6,808.4 1416.4,806.2 C1425.2,801.4 1424.5,794.8 1432.7,789.1 C1440.9,783.6 1442.3,786.6 1449.1,783.6 C1455.9,780.6 1455.9,778.9 1460.0,777.1 C1464.1,776.4 1464.1,776.4 1465.5,776.4" fill="none" stroke="#3e8eed" stroke-width="3.1" stroke-linejoin="round" stroke-linecap="round"/><path d="M664.3,1249.3 C671.4,1249.3 678.9,1247.2 692.9,1247.2 C706.9,1247.2 710.9,1247.5 720.4,1248.3 C729.9,1249.1 724.6,1248.3 731.0,1250.4 C737.4,1253.3 737.3,1259.9 745.8,1259.9 C754.3,1259.9 757.5,1259.9 764.9,1258.6 C772.3,1254.5 770.6,1248.1 775.4,1243.4 C780.1,1239.8 778.6,1240.8 783.9,1239.8 C789.2,1239.2 790.2,1239.2 796.6,1239.2 C803.0,1239.2 801.3,1242.0 809.3,1243.4 C817.2,1244.8 819.9,1243.4 828.4,1244.9 C836.9,1249.9 837.4,1263.5 843.2,1263.5 C849.0,1263.5 847.1,1263.5 851.6,1262.4 C856.1,1260.3 854.9,1261.1 861.2,1255.0 C867.6,1248.9 869.3,1243.4 877.0,1238.1 C884.7,1233.9 884.2,1236.3 891.9,1233.9 C899.6,1231.5 899.8,1231.0 907.7,1228.6 C915.6,1226.2 915.0,1225.4 923.6,1224.3 C932.2,1224.2 936.2,1224.3 942.1,1224.2 C947.3,1217.7 944.7,1218.6 947.3,1198.1 C949.9,1177.5 949.5,1167.4 952.6,1142.0 C955.7,1116.6 956.1,1114.0 959.6,1096.5 C963.1,1079.0 963.1,1080.2 966.6,1071.9 C970.1,1063.6 970.5,1063.2 973.6,1063.2 C976.7,1063.2 976.3,1063.2 978.9,1075.5 C981.5,1096.1 981.0,1109.7 984.1,1145.6 C987.2,1181.5 987.6,1192.0 991.1,1219.2 C994.6,1246.4 995.0,1242.6 998.1,1254.2 C1001.2,1265.8 1000.8,1265.8 1003.4,1265.8 C1006.0,1265.8 1006.5,1265.8 1008.7,1264.7 C1010.9,1256.6 1010.0,1264.7 1012.2,1233.2 C1014.4,1199.0 1015.2,1167.4 1017.4,1128.0 C1019.6,1088.6 1019.1,1090.1 1020.9,1075.5 C1022.6,1069.5 1020.9,1069.5 1024.4,1069.5 C1029.2,1069.5 1031.9,1069.5 1040.2,1070.2 C1048.5,1071.1 1049.4,1072.0 1057.7,1073.0 C1066.0,1074.0 1068.2,1074.4 1073.5,1074.4 C1078.8,1074.4 1076.2,1060.3 1078.8,1040.4 C1081.4,1020.5 1081.5,1011.9 1084.0,994.8 C1086.5,977.7 1085.5,978.0 1088.6,972.1 C1091.7,971.0 1092.6,971.0 1096.3,971.0 C1100.0,971.0 1100.5,971.4 1103.3,975.6 C1106.1,979.8 1105.3,975.6 1107.5,987.8 C1109.7,1008.4 1109.6,1018.5 1112.1,1057.9 C1114.5,1097.4 1114.9,1118.0 1117.3,1145.6 C1119.7,1168.3 1119.3,1168.3 1121.5,1168.3 C1123.7,1168.3 1123.6,1168.3 1126.1,1145.6 C1128.5,1118.0 1128.9,1094.7 1131.3,1057.9 C1133.7,1021.1 1133.6,1015.1 1135.5,998.3 C1137.4,990.6 1135.5,990.6 1139.0,990.6 C1145.8,990.6 1149.9,991.3 1162.9,991.3 C1175.9,991.3 1181.3,991.3 1190.9,991.3 C1200.5,991.3 1197.6,991.3 1201.4,996.6 C1205.2,1001.9 1203.8,996.6 1206.0,1012.4 C1208.2,1040.9 1208.1,1059.7 1210.2,1110.5 C1212.3,1161.3 1212.5,1178.9 1214.4,1215.7 C1216.3,1252.5 1216.3,1245.9 1217.9,1257.7 C1219.5,1263.0 1217.9,1263.0 1220.7,1263.0 C1225.3,1263.0 1228.9,1263.0 1236.4,1262.5 C1244.0,1261.0 1243.2,1258.6 1250.9,1257.1 C1258.6,1256.4 1259.1,1257.1 1267.3,1256.4 C1275.5,1255.7 1275.2,1254.2 1283.6,1254.2 C1291.9,1254.2 1295.5,1257.8 1300.7,1257.8 C1304.4,1257.8 1302.3,1257.8 1304.4,1241.8 C1306.5,1212.3 1306.8,1194.5 1309.1,1140.0 C1311.4,1085.5 1311.5,1058.8 1313.5,1023.6 C1315.5,999.3 1313.5,1005.6 1317.1,999.3 C1321.9,998.2 1324.7,998.8 1332.7,998.2 C1340.7,997.7 1340.4,997.1 1349.1,997.1 C1357.8,997.1 1358.7,997.1 1367.3,997.1 C1375.9,997.1 1375.9,1000.0 1383.6,1000.0 C1391.3,1000.0 1390.5,991.6 1398.2,991.6 C1405.9,991.6 1406.3,995.3 1414.5,995.3 C1422.7,995.3 1422.4,995.3 1430.9,995.3 C1439.4,995.3 1442.8,993.8 1448.4,993.8 C1453.5,993.8 1451.0,1000.8 1453.5,1016.4 C1456.0,1032.0 1456.1,1041.9 1458.2,1056.4 C1460.3,1070.9 1460.0,1069.0 1461.8,1074.5 C1463.6,1078.2 1464.6,1078.2 1465.5,1078.2" fill="none" stroke="#cf5f5c" stroke-width="3.1" stroke-linejoin="round" stroke-linecap="round"/><path d="M664.3,1225.4 C671.4,1225.4 680.4,1223.7 692.9,1223.7 C705.4,1223.7 704.6,1223.7 714.1,1223.7 C723.6,1223.7 723.1,1224.8 731.0,1224.8 C738.9,1224.8 739.7,1215.9 745.8,1215.9 C751.9,1215.9 750.5,1216.4 755.3,1220.1 C760.1,1223.8 759.9,1223.5 764.9,1230.7 C769.9,1237.9 770.6,1243.4 775.4,1248.7 C780.1,1251.9 778.8,1251.9 783.9,1251.9 C789.0,1251.9 791.4,1251.9 795.6,1246.6 C799.8,1241.3 797.9,1242.6 800.8,1230.7 C803.7,1218.8 804.3,1208.8 807.2,1198.9 C810.1,1191.1 807.2,1191.1 812.5,1191.1 C817.8,1191.1 821.2,1195.1 828.4,1195.1 C835.5,1195.1 832.9,1178.8 841.1,1178.8 C849.3,1178.8 854.1,1178.8 861.2,1179.5 C868.3,1183.2 865.7,1188.1 869.6,1193.7 C873.5,1199.3 871.2,1202.1 877.0,1202.1 C882.8,1202.1 887.1,1191.5 892.9,1191.5 C898.7,1191.5 896.6,1198.6 900.3,1206.3 C904.0,1214.0 904.0,1217.8 907.7,1222.2 C911.4,1223.9 910.3,1223.9 915.1,1223.9 C919.9,1223.9 921.5,1223.9 926.8,1222.6 C932.1,1217.9 932.1,1212.4 936.3,1205.3 C940.5,1198.2 939.0,1198.3 943.7,1194.3 C948.5,1190.3 950.8,1194.1 955.3,1189.4 C959.8,1184.8 958.0,1189.4 961.7,1175.7 C965.4,1157.7 965.8,1149.6 970.1,1117.5 C974.4,1085.4 975.0,1077.2 978.9,1047.4 C982.8,1017.6 982.8,1014.2 985.9,998.3 C989.0,983.6 987.6,988.2 991.1,983.6 C994.6,979.8 995.5,979.8 999.9,979.8 C1004.3,979.8 1005.6,979.8 1008.7,980.8 C1011.8,985.4 1010.0,980.8 1012.2,998.3 C1014.4,1026.3 1014.8,1050.9 1017.4,1093.0 C1020.0,1135.1 1019.6,1137.2 1022.7,1166.6 C1025.8,1195.9 1025.8,1196.0 1029.7,1210.4 C1033.7,1224.4 1034.1,1224.4 1038.5,1224.4 C1042.9,1224.4 1041.5,1224.4 1047.2,1222.7 C1052.9,1220.1 1055.1,1217.9 1061.2,1213.9 C1067.3,1210.0 1066.4,1210.2 1071.7,1206.9 C1077.0,1203.7 1077.0,1206.2 1082.3,1200.9 C1087.6,1195.7 1088.0,1195.4 1092.8,1185.9 C1097.6,1176.5 1097.5,1181.9 1101.5,1163.1 C1105.5,1144.2 1105.5,1142.9 1108.6,1110.5 C1111.7,1078.1 1111.2,1070.2 1113.8,1033.4 C1116.4,996.6 1116.9,983.6 1119.1,963.3 C1121.3,952.1 1120.8,952.1 1122.6,952.1 C1124.3,952.1 1123.9,952.1 1126.1,970.3 C1128.3,996.8 1129.1,1023.7 1131.3,1057.9 C1133.5,1092.1 1133.0,1090.3 1134.8,1107.0 C1136.5,1123.7 1135.6,1124.5 1138.3,1124.5 C1141.0,1124.5 1141.5,1120.3 1145.4,1115.8 C1149.4,1111.2 1148.8,1110.2 1154.1,1106.3 C1159.3,1102.3 1161.6,1100.0 1166.4,1100.0 C1171.2,1100.0 1169.0,1100.0 1173.4,1101.7 C1177.8,1106.1 1178.7,1111.3 1183.9,1117.5 C1189.2,1123.7 1189.6,1123.6 1194.4,1126.3 C1199.2,1128.2 1200.0,1128.2 1203.2,1128.2 C1206.4,1128.2 1205.1,1128.0 1207.3,1085.5 C1209.5,1043.0 1209.9,1010.0 1212.0,958.2 C1214.1,906.4 1213.8,904.6 1215.6,878.2 C1217.4,852.7 1216.4,852.7 1219.3,852.7 C1222.2,852.7 1223.0,858.9 1227.3,865.5 C1231.6,872.1 1232.3,879.3 1236.4,879.3 C1240.5,879.3 1240.0,876.4 1243.6,872.7 C1247.2,869.0 1245.0,864.4 1250.9,864.4 C1256.8,864.4 1259.1,867.3 1267.3,867.3 C1275.5,867.3 1275.4,864.4 1283.6,864.4 C1291.8,864.4 1294.8,864.4 1300.0,867.3 C1304.4,874.4 1302.1,867.3 1304.4,892.7 C1306.7,929.1 1306.8,960.0 1309.1,1012.7 C1311.4,1065.4 1311.7,1076.0 1313.8,1103.6 C1315.9,1122.9 1313.8,1122.9 1317.5,1122.9 C1322.2,1122.9 1324.8,1121.2 1332.7,1118.9 C1340.6,1116.6 1340.9,1113.5 1349.1,1113.5 C1357.3,1113.5 1356.9,1118.2 1365.5,1118.2 C1374.1,1118.2 1377.2,1118.2 1383.6,1114.5 C1389.9,1110.0 1387.2,1107.9 1390.9,1100.0 C1394.6,1092.1 1392.3,1088.5 1398.2,1082.9 C1404.1,1077.5 1406.3,1082.9 1414.5,1077.5 C1422.7,1072.0 1422.4,1066.2 1430.9,1060.7 C1439.4,1055.6 1442.8,1060.7 1448.4,1055.6 C1453.5,1048.1 1451.0,1048.0 1453.5,1030.9 C1456.0,1013.8 1456.1,1002.8 1458.2,987.3 C1460.3,971.8 1460.0,974.5 1461.8,969.1 C1463.6,965.5 1464.6,965.5 1465.5,965.5" fill="none" stroke="#55b356" stroke-width="3.1" stroke-linejoin="round" stroke-linecap="round"/><path d="M1086.9,627.3 H1114.9" stroke="#3e8eed" stroke-width="3.5"/><circle cx="1100.9" cy="627.3" r="6.9" fill="#3e8eed"/><path d="M1265.5,627.3 H1293.7" stroke="#cf5f5c" stroke-width="3.5"/><path d="M1279.6,620.0 L1286.9,627.3 L1279.6,634.5999999999999 L1272.3,627.3 Z" fill="#cf5f5c"/><path d="M1373.2,627.3 H1401.2" stroke="#55b356" stroke-width="3.5"/><rect x="1380.3" y="620.4" width="13.8" height="13.8" fill="#55b356"/></svg>
<div style="position:absolute;top:617.25px;font-size:20.5px;line-height:20.5px;color:#333;white-space:nowrap;font-weight:bold;letter-spacing:0.085px;left:1124.60px;">Resources</div>
<div style="position:absolute;top:617.25px;font-size:20.5px;line-height:20.5px;color:#333;white-space:nowrap;font-weight:bold;letter-spacing:-0.229px;left:1303.40px;">Fail</div>
<div style="position:absolute;top:617.25px;font-size:20.5px;line-height:20.5px;color:#333;white-space:nowrap;font-weight:bold;letter-spacing:-0.120px;left:1411.00px;">Pass</div>
<div style="position:absolute;top:1259.50px;font-size:19.2px;line-height:19.2px;color:#666;white-space:nowrap;left:620.12px;">0</div>
<div style="position:absolute;top:1173.85px;font-size:19.2px;line-height:19.2px;color:#666;white-space:nowrap;left:610.52px;">5k</div>
<div style="position:absolute;top:1088.20px;font-size:19.2px;line-height:19.2px;color:#666;white-space:nowrap;left:599.84px;">10k</div>
<div style="position:absolute;top:1002.55px;font-size:19.2px;line-height:19.2px;color:#666;white-space:nowrap;left:599.84px;">15k</div>
<div style="position:absolute;top:916.90px;font-size:19.2px;line-height:19.2px;color:#666;white-space:nowrap;left:599.84px;">20k</div>
<div style="position:absolute;top:831.25px;font-size:19.2px;line-height:19.2px;color:#666;white-space:nowrap;left:599.84px;">25k</div>
<div style="position:absolute;top:745.60px;font-size:19.2px;line-height:19.2px;color:#666;white-space:nowrap;left:599.84px;">30k</div>
<div style="position:absolute;top:659.95px;font-size:19.2px;line-height:19.2px;color:#666;white-space:nowrap;left:599.84px;">35k</div>
<div style="position:absolute;top:1283.50px;font-size:19.2px;line-height:19.2px;color:#666;white-space:nowrap;left:677.85px;">Jul '19</div>
<div style="position:absolute;top:1283.50px;font-size:19.2px;line-height:19.2px;color:#666;white-space:nowrap;left:880.94px;">Jan '20</div>
<div style="position:absolute;top:1283.50px;font-size:19.2px;line-height:19.2px;color:#666;white-space:nowrap;left:1088.15px;">Jul '20</div>
<div style="position:absolute;top:1283.50px;font-size:19.2px;line-height:19.2px;color:#666;white-space:nowrap;left:1290.94px;">Jan '21</div>
<div style="position:absolute;left:1530.80px;top:538.00px;width:931.60px;height:798.60px;box-sizing:border-box;background:#fff;border:1.6px solid #e7eaea;border-radius:7px;overflow:hidden;"><div style="position:absolute;left:0;top:0;right:0;height:64.2px;background:#eaecec;"></div></div>
<div style="position:absolute;top:558.10px;font-size:28px;line-height:28px;color:#222;white-space:nowrap;letter-spacing:-0.592px;left:1560.40px;">Compliance Coverage</div>
<svg style="position:absolute;left:0.00px;top:0.00px;pointer-events:none;" width="2516" height="1573" viewBox="0 0 2516 1573"><circle cx="1997.0" cy="952.3" r="331.8" fill="#e6e7e7"/><path d="M1997.00,620.50 A331.8,331.8 0 0 1 2323.35,1012.20 L2229.81,995.03 A236.7,236.7 0 0 0 1997.00,715.60 Z" fill="#d0615e" stroke="#ebeded" stroke-width="1.5" stroke-linejoin="round"/><path d="M1949.68,1280.71 A331.8,331.8 0 0 1 1937.67,1278.75 L1954.68,1185.19 A236.7,236.7 0 0 0 1963.24,1186.58 Z" fill="#56b457" stroke="#ebeded" stroke-width="1.5" stroke-linejoin="round"/><path d="M1924.62,1276.11 A331.8,331.8 0 0 1 1740.97,741.25 L1814.36,801.74 A236.7,236.7 0 0 0 1945.37,1183.30 Z" fill="#56b457" stroke="#ebeded" stroke-width="1.5" stroke-linejoin="round"/><path d="M1754.53,725.80 A331.8,331.8 0 0 1 1774.12,706.50 L1838.00,776.95 A236.7,236.7 0 0 0 1824.03,790.72 Z" fill="#56b457" stroke="#ebeded" stroke-width="1.5" stroke-linejoin="round"/><path d="M1784.83,697.20 A331.8,331.8 0 0 1 1793.41,690.30 L1851.76,765.40 A236.7,236.7 0 0 0 1845.64,770.32 Z" fill="#56b457" stroke="#ebeded" stroke-width="1.5" stroke-linejoin="round"/><path d="M1805.03,681.67 A331.8,331.8 0 0 1 1813.14,676.10 L1865.84,755.26 A236.7,236.7 0 0 0 1860.05,759.24 Z" fill="#56b457" stroke="#ebeded" stroke-width="1.5" stroke-linejoin="round"/><path d="M1817.75,673.09 A331.8,331.8 0 0 1 1835.13,662.66 L1881.52,745.68 A236.7,236.7 0 0 0 1869.13,753.11 Z" fill="#56b457" stroke="#ebeded" stroke-width="1.5" stroke-linejoin="round"/><path d="M1845.33,657.19 A331.8,331.8 0 0 1 1852.33,653.70 L1893.79,739.28 A236.7,236.7 0 0 0 1888.80,741.78 Z" fill="#56b457" stroke="#ebeded" stroke-width="1.5" stroke-linejoin="round"/><path d="M1871.63,645.10 A331.8,331.8 0 0 1 1877.55,642.75 L1911.79,731.47 A236.7,236.7 0 0 0 1907.57,733.15 Z" fill="#56b457" stroke="#ebeded" stroke-width="1.5" stroke-linejoin="round"/><path d="M1881.62,641.21 A331.8,331.8 0 0 1 1890.07,638.20 L1920.72,728.23 A236.7,236.7 0 0 0 1914.69,730.37 Z" fill="#56b457" stroke="#ebeded" stroke-width="1.5" stroke-linejoin="round"/><path d="M1893.53,637.05 A331.8,331.8 0 0 1 1898.33,635.51 L1926.61,726.31 A236.7,236.7 0 0 0 1923.19,727.40 Z" fill="#56b457" stroke="#ebeded" stroke-width="1.5" stroke-linejoin="round"/><path d="M1900.66,634.80 A331.8,331.8 0 0 1 1909.61,632.21 L1934.66,723.96 A236.7,236.7 0 0 0 1928.27,725.80 Z" fill="#56b457" stroke="#ebeded" stroke-width="1.5" stroke-linejoin="round"/><path d="M1910.01,632.11 A331.8,331.8 0 0 1 1927.11,627.94 L1947.14,720.91 A236.7,236.7 0 0 0 1934.94,723.88 Z" fill="#56b457" stroke="#ebeded" stroke-width="1.5" stroke-linejoin="round"/><path d="M1927.11,627.94 A331.8,331.8 0 0 1 1944.41,624.69 L1959.48,718.59 A236.7,236.7 0 0 0 1947.14,720.91 Z" fill="#56b457" stroke="#ebeded" stroke-width="1.5" stroke-linejoin="round"/><path d="M1944.41,624.69 A331.8,331.8 0 0 1 1961.86,622.37 L1971.93,716.93 A236.7,236.7 0 0 0 1959.48,718.59 Z" fill="#56b457" stroke="#ebeded" stroke-width="1.5" stroke-linejoin="round"/><path d="M1961.86,622.37 A331.8,331.8 0 0 1 1979.40,620.97 L1984.45,715.93 A236.7,236.7 0 0 0 1971.93,716.93 Z" fill="#56b457" stroke="#ebeded" stroke-width="1.5" stroke-linejoin="round"/><path d="M1979.40,620.97 A331.8,331.8 0 0 1 1997.00,620.50 L1997.00,715.60 A236.7,236.7 0 0 0 1984.45,715.93 Z" fill="#56b457" stroke="#ebeded" stroke-width="1.5" stroke-linejoin="round"/><path d="M1935.74,1278.09 A331.5,331.5 0 0 1 1932.90,1277.54 L1951.07,1185.32 A237.5,237.5 0 0 0 1953.11,1185.71 Z" fill="#d0615e"/><path d="M1930.63,1277.09 A331.5,331.5 0 0 1 1927.79,1276.50 L1947.42,1184.57 A237.5,237.5 0 0 0 1949.45,1184.99 Z" fill="#d0615e"/><path d="M1741.94,740.55 A331.5,331.5 0 0 1 1746.43,735.25 L1817.48,796.80 A237.5,237.5 0 0 0 1814.27,800.59 Z" fill="#d0615e"/><path d="M1747.38,734.16 A331.5,331.5 0 0 1 1749.87,731.34 L1819.95,794.00 A237.5,237.5 0 0 0 1818.17,796.02 Z" fill="#56b457"/><path d="M1751.62,729.41 A331.5,331.5 0 0 1 1752.20,728.77 L1821.62,792.15 A237.5,237.5 0 0 0 1821.20,792.61 Z" fill="#e9b9b7"/><path d="M1774.97,706.14 A331.5,331.5 0 0 1 1783.92,698.36 L1844.34,770.36 A237.5,237.5 0 0 0 1837.93,775.94 Z" fill="#d0615e"/><path d="M1794.28,690.01 A331.5,331.5 0 0 1 1804.73,682.25 L1859.25,758.83 A237.5,237.5 0 0 0 1851.76,764.38 Z" fill="#d0615e"/><path d="M1814.52,675.55 A331.5,331.5 0 0 1 1816.94,673.97 L1868.00,752.89 A237.5,237.5 0 0 0 1866.26,754.02 Z" fill="#d0615e"/><path d="M1836.03,662.50 A331.5,331.5 0 0 1 1838.57,661.11 L1883.49,743.68 A237.5,237.5 0 0 0 1881.68,744.68 Z" fill="#d0615e"/><path d="M1840.60,660.01 A331.5,331.5 0 0 1 1841.63,659.47 L1885.68,742.50 A237.5,237.5 0 0 0 1884.95,742.89 Z" fill="#9fd29f"/><path d="M1842.14,659.20 A331.5,331.5 0 0 1 1843.93,658.26 L1887.33,741.63 A237.5,237.5 0 0 0 1886.05,742.31 Z" fill="#d0615e"/><path d="M1854.55,652.97 A331.5,331.5 0 0 1 1863.75,648.76 L1901.54,734.83 A237.5,237.5 0 0 0 1894.94,737.85 Z" fill="#d0615e"/><path d="M1865.08,648.18 A331.5,331.5 0 0 1 1866.14,647.72 L1903.25,734.09 A237.5,237.5 0 0 0 1902.49,734.42 Z" fill="#9fd29f"/><path d="M1868.27,646.81 A331.5,331.5 0 0 1 1871.21,645.59 L1906.88,732.56 A237.5,237.5 0 0 0 1904.77,733.44 Z" fill="#d0615e"/><path d="M1879.01,642.51 A331.5,331.5 0 0 1 1880.91,641.79 L1913.83,729.84 A237.5,237.5 0 0 0 1912.47,730.35 Z" fill="#d0615e"/><path d="M1890.99,638.21 A331.5,331.5 0 0 1 1892.91,637.57 L1922.43,726.81 A237.5,237.5 0 0 0 1921.05,727.27 Z" fill="#d0615e"/><path d="M1898.97,635.63 A331.5,331.5 0 0 1 1899.80,635.37 L1927.36,725.24 A237.5,237.5 0 0 0 1926.77,725.42 Z" fill="#e9a9a7"/><path d="M1997.00,715.60 A236.7,236.7 0 1 1 1963.24,1186.58 L1969.97,1139.86 A189.5,189.5 0 1 0 1997.00,762.80 Z" fill="#4d9e8a" stroke="#ebeded" stroke-width="1.5" stroke-linejoin="round"/><path d="M1963.24,1186.58 A236.7,236.7 0 0 1 1953.86,1185.04 L1962.47,1138.63 A189.5,189.5 0 0 0 1969.97,1139.86 Z" fill="#4d9e8a" stroke="#ebeded" stroke-width="1.5" stroke-linejoin="round"/><path d="M1953.86,1185.04 A236.7,236.7 0 0 1 1948.60,1184.00 L1958.25,1137.80 A189.5,189.5 0 0 0 1962.47,1138.63 Z" fill="#4d9e8a" stroke="#ebeded" stroke-width="1.5" stroke-linejoin="round"/><path d="M1948.60,1184.00 A236.7,236.7 0 0 1 1814.36,801.74 L1850.78,831.76 A189.5,189.5 0 0 0 1958.25,1137.80 Z" fill="#4d9e8a" stroke="#ebeded" stroke-width="1.5" stroke-linejoin="round"/><path d="M1814.36,801.74 A236.7,236.7 0 0 1 1824.45,790.27 L1858.86,822.58 A189.5,189.5 0 0 0 1850.78,831.76 Z" fill="#94c248" stroke="#ebeded" stroke-width="1.5" stroke-linejoin="round"/><path d="M1824.45,790.27 A236.7,236.7 0 0 1 1838.16,776.81 L1869.83,811.81 A189.5,189.5 0 0 0 1858.86,822.58 Z" fill="#94c248" stroke="#ebeded" stroke-width="1.5" stroke-linejoin="round"/><path d="M1838.16,776.81 A236.7,236.7 0 0 1 1852.25,765.02 L1881.12,802.36 A189.5,189.5 0 0 0 1869.83,811.81 Z" fill="#94c248" stroke="#ebeded" stroke-width="1.5" stroke-linejoin="round"/><path d="M1852.25,765.02 A236.7,236.7 0 0 1 1866.36,754.92 L1892.41,794.28 A189.5,189.5 0 0 0 1881.12,802.36 Z" fill="#2f3961" stroke="#ebeded" stroke-width="1.5" stroke-linejoin="round"/><path d="M1866.36,754.92 A236.7,236.7 0 0 1 1880.80,746.08 L1903.97,787.20 A189.5,189.5 0 0 0 1892.41,794.28 Z" fill="#2f3961" stroke="#ebeded" stroke-width="1.5" stroke-linejoin="round"/><path d="M1880.80,746.08 A236.7,236.7 0 0 1 1883.69,744.48 L1906.29,785.92 A189.5,189.5 0 0 0 1903.97,787.20 Z" fill="#2f3961" stroke="#ebeded" stroke-width="1.5" stroke-linejoin="round"/><path d="M1883.69,744.48 A236.7,236.7 0 0 1 1886.61,742.92 L1908.62,784.67 A189.5,189.5 0 0 0 1906.29,785.92 Z" fill="#2f3961" stroke="#ebeded" stroke-width="1.5" stroke-linejoin="round"/><path d="M1886.61,742.92 A236.7,236.7 0 0 1 1895.47,738.48 L1915.72,781.12 A189.5,189.5 0 0 0 1908.62,784.67 Z" fill="#2f3961" stroke="#ebeded" stroke-width="1.5" stroke-linejoin="round"/><path d="M1895.47,738.48 A236.7,236.7 0 0 1 1904.51,734.42 L1922.96,777.86 A189.5,189.5 0 0 0 1915.72,781.12 Z" fill="#4a525d" stroke="#ebeded" stroke-width="1.5" stroke-linejoin="round"/><path d="M1904.51,734.42 A236.7,236.7 0 0 1 1912.95,731.03 L1929.71,775.15 A189.5,189.5 0 0 0 1922.96,777.86 Z" fill="#4a525d" stroke="#ebeded" stroke-width="1.5" stroke-linejoin="round"/><path d="M1912.95,731.03 A236.7,236.7 0 0 1 1921.11,728.10 L1936.24,772.80 A189.5,189.5 0 0 0 1929.71,775.15 Z" fill="#4a525d" stroke="#ebeded" stroke-width="1.5" stroke-linejoin="round"/><path d="M1921.11,728.10 A236.7,236.7 0 0 1 1926.61,726.31 L1940.65,771.37 A189.5,189.5 0 0 0 1936.24,772.80 Z" fill="#4a525d" stroke="#ebeded" stroke-width="1.5" stroke-linejoin="round"/><path d="M1926.61,726.31 A236.7,236.7 0 0 1 1934.94,723.88 L1947.32,769.43 A189.5,189.5 0 0 0 1940.65,771.37 Z" fill="#4a525d" stroke="#ebeded" stroke-width="1.5" stroke-linejoin="round"/><path d="M1934.94,723.88 A236.7,236.7 0 0 1 1947.14,720.91 L1957.08,767.05 A189.5,189.5 0 0 0 1947.32,769.43 Z" fill="#1f4d7b" stroke="#ebeded" stroke-width="1.5" stroke-linejoin="round"/><path d="M1947.14,720.91 A236.7,236.7 0 0 1 1959.48,718.59 L1966.96,765.20 A189.5,189.5 0 0 0 1957.08,767.05 Z" fill="#1f4d7b" stroke="#ebeded" stroke-width="1.5" stroke-linejoin="round"/><path d="M1959.48,718.59 A236.7,236.7 0 0 1 1971.93,716.93 L1976.93,763.87 A189.5,189.5 0 0 0 1966.96,765.20 Z" fill="#1f4d7b" stroke="#ebeded" stroke-width="1.5" stroke-linejoin="round"/><path d="M1971.93,716.93 A236.7,236.7 0 0 1 1984.45,715.93 L1986.95,763.07 A189.5,189.5 0 0 0 1976.93,763.87 Z" fill="#1f4d7b" stroke="#ebeded" stroke-width="1.5" stroke-linejoin="round"/><path d="M1984.45,715.93 A236.7,236.7 0 0 1 1997.00,715.60 L1997.00,762.80 A189.5,189.5 0 0 0 1986.95,763.07 Z" fill="#1f4d7b" stroke="#ebeded" stroke-width="1.5" stroke-linejoin="round"/><path d="M1997.00,762.80 A189.5,189.5 0 1 1 1850.78,831.76 L1923.85,892.00 A94.8,94.8 0 1 0 1997.00,857.50 Z" fill="#4d9e8a" stroke="#ebeded" stroke-width="1.5" stroke-linejoin="round"/><path d="M1850.78,831.76 A189.5,189.5 0 0 1 1880.98,802.46 L1938.96,877.34 A94.8,94.8 0 0 0 1923.85,892.00 Z" fill="#94c248" stroke="#ebeded" stroke-width="1.5" stroke-linejoin="round"/><path d="M1880.98,802.46 A189.5,189.5 0 0 1 1915.42,781.26 L1956.19,866.73 A94.8,94.8 0 0 0 1938.96,877.34 Z" fill="#2f3961" stroke="#ebeded" stroke-width="1.5" stroke-linejoin="round"/><path d="M1915.42,781.26 A189.5,189.5 0 0 1 1947.32,769.43 L1972.14,860.82 A94.8,94.8 0 0 0 1956.19,866.73 Z" fill="#4a525d" stroke="#ebeded" stroke-width="1.5" stroke-linejoin="round"/><path d="M1947.32,769.43 A189.5,189.5 0 0 1 1997.00,762.80 L1997.00,857.50 A94.8,94.8 0 0 0 1972.14,860.82 Z" fill="#1f4d7b" stroke="#ebeded" stroke-width="1.5" stroke-linejoin="round"/><path d="M2323.35,1012.20 A331.8,331.8 0 0 1 1950.25,1280.79 L1963.65,1186.64 A236.7,236.7 0 0 0 2229.81,995.03 Z" fill="#90d891" stroke="#b4b4b4" stroke-width="1.7" stroke-linejoin="round"/><circle cx="1997.0" cy="952.3" r="94.8" fill="#fff" stroke="#ebeded" stroke-width="1.5"/><text transform="translate(2216.0,771.1) rotate(51.5)" x="0" y="7.1" text-anchor="middle" font-family="Liberation Sans, sans-serif" font-weight="bold" font-size="20" fill="#fff" textLength="37" lengthAdjust="spacingAndGlyphs">Fail</text><text transform="translate(2163.1,1183.0) rotate(-35.8)" x="0" y="7.1" text-anchor="middle" font-family="Liberation Sans, sans-serif" font-weight="bold" font-size="20" fill="#fff" textLength="47" lengthAdjust="spacingAndGlyphs">Pass</text><text transform="translate(1728.1,1049.1) rotate(70.6)" x="0" y="7.1" text-anchor="middle" font-family="Liberation Sans, sans-serif" font-weight="bold" font-size="20" fill="#fff" textLength="47" lengthAdjust="spacingAndGlyphs">Pass</text><text transform="translate(2208.9,974.9) rotate(-83.9)" x="0" y="7.1" text-anchor="middle" font-family="Liberation Sans, sans-serif" font-weight="bold" font-size="20" fill="#fff" textLength="28" lengthAdjust="spacingAndGlyphs">5.2</text><text transform="translate(1796.2,1026.6) rotate(70.2)" x="0" y="7.1" text-anchor="middle" font-family="Liberation Sans, sans-serif" font-weight="bold" font-size="20" fill="#fff" textLength="28" lengthAdjust="spacingAndGlyphs">5.3</text><text transform="translate(2057.6,1080.9) rotate(-25.2)" x="0" y="7.1" text-anchor="middle" font-family="Liberation Sans, sans-serif" font-weight="bold" font-size="20" fill="#fff" textLength="107" lengthAdjust="spacingAndGlyphs">Networking</text><text transform="translate(1897.6,849.9) rotate(45.9)" x="0" y="7.1" text-anchor="middle" font-family="Liberation Sans, sans-serif" font-weight="bold" font-size="20" fill="#fff" textLength="66" lengthAdjust="spacingAndGlyphs">Stora…</text><text transform="translate(1922.1,830.9) rotate(58.4)" x="0" y="7.1" text-anchor="middle" font-family="Liberation Sans, sans-serif" font-weight="bold" font-size="20" fill="#fff" textLength="66" lengthAdjust="spacingAndGlyphs">Loggi…</text><text transform="translate(1947.3,818.6) rotate(69.6)" x="0" y="7.1" text-anchor="middle" font-family="Liberation Sans, sans-serif" font-weight="bold" font-size="20" fill="#fff" textLength="70" lengthAdjust="spacingAndGlyphs">Identit…</text><text transform="translate(1978.1,810.9) rotate(82.4)" x="0" y="7.1" text-anchor="middle" font-family="Liberation Sans, sans-serif" font-weight="bold" font-size="20" fill="#fff" textLength="67" lengthAdjust="spacingAndGlyphs">Monit…</text><text transform="translate(1797.4,749.9) rotate(45.4)" x="0" y="7.1" text-anchor="middle" font-family="Liberation Sans, sans-serif" font-weight="bold" font-size="20" fill="#fff" textLength="46" lengthAdjust="spacingAndGlyphs">Pass</text><text x="1996.7" y="951.9" text-anchor="middle" font-family="Liberation Sans, sans-serif" font-weight="bold" font-size="20" fill="#111" textLength="67" lengthAdjust="spacingAndGlyphs">CIS v…</text><path d="M2100.6,1109.4 H2227.7999999999997 Q2231.7999999999997,1109.4 2231.7999999999997,1113.4 V1156.2 Q2231.7999999999997,1160.2 2227.7999999999997,1160.2 H2173.1 L2162.6,1172.6000000000001 L2152.1,1160.2 H2100.6 Q2096.6,1160.2 2096.6,1156.2 V1113.4 Q2096.6,1109.4 2100.6,1109.4 Z" transform="translate(1.6,2)" fill="none" stroke="#000" stroke-opacity="0.10" stroke-width="5"/><path d="M2100.6,1109.4 H2227.7999999999997 Q2231.7999999999997,1109.4 2231.7999999999997,1113.4 V1156.2 Q2231.7999999999997,1160.2 2227.7999999999997,1160.2 H2173.1 L2162.6,1172.6000000000001 L2152.1,1160.2 H2100.6 Q2096.6,1160.2 2096.6,1156.2 V1113.4 Q2096.6,1109.4 2100.6,1109.4 Z" transform="translate(1.6,2)" fill="none" stroke="#000" stroke-opacity="0.10" stroke-width="3"/><path d="M2100.6,1109.4 H2227.7999999999997 Q2231.7999999999997,1109.4 2231.7999999999997,1113.4 V1156.2 Q2231.7999999999997,1160.2 2227.7999999999997,1160.2 H2173.1 L2162.6,1172.6000000000001 L2152.1,1160.2 H2100.6 Q2096.6,1160.2 2096.6,1156.2 V1113.4 Q2096.6,1109.4 2100.6,1109.4 Z" fill="#f7f7f7" fill-opacity="0.86" stroke="#56b457" stroke-width="1.8"/><text x="2109.9" y="1142.8" font-family="Liberation Sans, sans-serif" font-size="20" fill="#333"><tspan font-weight="bold">Pass:</tspan><tspan dx="6.5">8741</tspan></text></svg>
<div style="position:absolute;left:1897.60px;top:1387.00px;width:77.00px;height:39.00px;box-sizing:border-box;background:#babcbc;border-radius:19.5px;box-shadow:-3px 5px 8px rgba(0,0,0,0.05);"></div>
<div style="position:absolute;left:1900.90px;top:1390.50px;width:32.00px;height:32.00px;box-sizing:border-box;background:#fff;border-radius:50%;box-shadow:0 1px 5px 1px rgba(0,0,0,0.28);"></div>
<div style="position:absolute;top:1396.25px;font-size:20.5px;line-height:20.5px;color:#fff;white-space:nowrap;left:1942.69px;">%</div>
<div style="position:absolute;left:2001.40px;top:1385.80px;width:304.40px;height:51.80px;box-sizing:border-box;background:#fff;border:2px solid #dadcdc;border-radius:7px;"></div>
<div style="position:absolute;top:1402.90px;font-size:19px;line-height:19px;color:#c0c0c0;white-space:nowrap;letter-spacing:-0.934px;left:2021.90px;">Search</div>
<svg style="position:absolute;left:2266.00px;top:1402.00px;" width="22" height="22" viewBox="0 0 22 22"><circle cx="9.3" cy="8.9" r="5.6" fill="none" stroke="#a9a9a9" stroke-width="1.7"/><path d="M13.4,13.2 L18.6,18.6" stroke="#a9a9a9" stroke-width="2" stroke-linecap="round"/></svg>
<div style="position:absolute;left:2332.50px;top:1385.60px;width:52.00px;height:52.20px;box-sizing:border-box;background:#f4f5f5;border:2px solid #7d7d7d;border-radius:7px;"></div>
<svg style="position:absolute;left:2344.00px;top:1397.00px;" width="30" height="30" viewBox="0 0 30 30"><path d="M12,3 H17.6 V12.4 H23.2 L14.8,21.2 L6.4,12.4 H12 Z" fill="#222"/><path d="M3,20.6 H8.6 L11,23.4 H18.6 L21,20.6 H26.6 V27.4 H3 Z" fill="#222"/><rect x="20.4" y="23.8" width="1.8" height="1.6" fill="#f4f5f5"/><rect x="23.2" y="23.8" width="1.8" height="1.6" fill="#f4f5f5"/></svg>
<div style="position:absolute;left:2411.50px;top:1385.60px;width:52.00px;height:52.20px;box-sizing:border-box;background:#fff;border:2px solid #8a8a8a;border-radius:7px;"></div>
<svg style="position:absolute;left:2424.00px;top:1399.00px;" width="28" height="26" viewBox="0 0 28 26"><path d="M3,5.2 H12.2 M15.2,5.2 H24.4 M3,10.2 H12.2 M15.2,10.2 H24.4 M3,15.2 H12.2 M15.2,15.2 H24.4 M3,20.2 H12.2 M15.2,20.2 H24.4" stroke="#222" stroke-width="2.5"/></svg>
<div style="position:absolute;left:569.80px;top:1464.60px;width:1892.80px;height:108.40px;box-sizing:border-box;background:#fafafa;border:2.2px solid #c4c9cf;border-bottom:2px solid #d6dadd;"></div>
<div style="position:absolute;left:572.00px;top:1466.80px;width:1888.40px;height:54.20px;box-sizing:border-box;background:#fff;border-bottom:2.2px solid #cdd2d7;"></div>
<div style="position:absolute;left:981.90px;top:1466.00px;width:1.40px;height:106.00px;box-sizing:border-box;background:#e0e3e6;"></div>
<div style="position:absolute;left:2173.70px;top:1466.00px;width:1.40px;height:106.00px;box-sizing:border-box;background:#e0e3e6;"></div>
<div style="position:absolute;left:2406.10px;top:1466.00px;width:1.40px;height:106.00px;box-sizing:border-box;background:#e0e3e6;"></div>
<div style="position:absolute;top:1484.10px;font-size:22px;line-height:22px;color:#2b2b2b;white-space:nowrap;font-weight:bold;letter-spacing:-1.188px;left:593.00px;">REQUIREMENT</div>
<svg style="position:absolute;left:751.00px;top:1485.60px;" width="26" height="18" viewBox="0 0 26 18"><path d="M6.4,1.4 V15.6 M1.4,10.6 L6.4,15.8 L11.4,10.6" fill="none" stroke="#7a7a7a" stroke-width="1.5"/><path d="M18.4,16 V1.8 M13.4,6.8 L18.4,1.6 L23.4,6.8" fill="none" stroke="#7a7a7a" stroke-width="1.5"/></svg>
<svg style="position:absolute;left:939.40px;top:1487.40px;" width="20" height="14" viewBox="0 0 20 14"><path d="M0.4,1.4 H18.6 M0.4,6.9 H18.6 M0.4,12.4 H18.6" stroke="#6b6b6b" stroke-width="1.6"/></svg>
<div style="position:absolute;top:1484.10px;font-size:22px;line-height:22px;color:#2b2b2b;white-space:nowrap;font-weight:bold;letter-spacing:-1.077px;left:1004.70px;">DESCRIPTION</div>
<svg style="position:absolute;left:1151.40px;top:1485.60px;" width="26" height="18" viewBox="0 0 26 18"><path d="M6.4,1.4 V15.6 M1.4,10.6 L6.4,15.8 L11.4,10.6" fill="none" stroke="#7a7a7a" stroke-width="1.5"/><path d="M18.4,16 V1.8 M13.4,6.8 L18.4,1.6 L23.4,6.8" fill="none" stroke="#7a7a7a" stroke-width="1.5"/></svg>
<svg style="position:absolute;left:2131.00px;top:1487.40px;" width="20" height="14" viewBox="0 0 20 14"><path d="M0.4,1.4 H18.6 M0.4,6.9 H18.6 M0.4,12.4 H18.6" stroke="#6b6b6b" stroke-width="1.6"/></svg>
<div style="position:absolute;top:1484.10px;font-size:22px;line-height:22px;color:#2b2b2b;white-space:nowrap;font-weight:bold;letter-spacing:-1.461px;left:2196.70px;">POLICIES</div>
<svg style="position:absolute;left:2296.60px;top:1485.60px;" width="26" height="18" viewBox="0 0 26 18"><path d="M6.4,1.4 V15.6 M1.4,10.6 L6.4,15.8 L11.4,10.6" fill="none" stroke="#7a7a7a" stroke-width="1.5"/><path d="M18.4,16 V1.8 M13.4,6.8 L18.4,1.6 L23.4,6.8" fill="none" stroke="#7a7a7a" stroke-width="1.5"/></svg>
<svg style="position:absolute;left:2363.60px;top:1487.40px;" width="20" height="14" viewBox="0 0 20 14"><path d="M0.4,1.4 H18.6 M0.4,6.9 H18.6 M0.4,12.4 H18.6" stroke="#6b6b6b" stroke-width="1.6"/></svg>
<div style="position:absolute;top:1534.75px;font-size:22.5px;line-height:22.5px;color:#2a70c8;white-space:nowrap;letter-spacing:-0.295px;left:590.60px;">Networking</div>
<svg style="position:absolute;left:710.00px;top:1531.00px;" width="24" height="24" viewBox="0 0 24 24"><path d="M10.6,4.4 H4.2 Q2.8,4.4 2.8,5.8 V19 Q2.8,20.4 4.2,20.4 H17.4 Q18.8,20.4 18.8,19 V12.6" fill="none" stroke="#2b2b2b" stroke-width="1.9"/><path d="M13.6,2.8 H20.4 V9.6 M20,3.2 L10.4,12.8" fill="none" stroke="#2b2b2b" stroke-width="1.9"/></svg>
<div style="position:absolute;top:1534.75px;font-size:22.5px;line-height:22.5px;color:#333;white-space:nowrap;letter-spacing:-0.817px;left:1003.70px;">This section contains recommendations for configuring security-related aspects of the default Virtual Private Cloud (VPC)</div>
<div style="position:absolute;top:1534.65px;font-size:22.5px;line-height:22.5px;color:#2a70c8;white-space:nowrap;left:2195.00px;">5</div>
<div style="position:absolute;top:1534.65px;font-size:22.5px;line-height:22.5px;color:#2a70c8;white-space:nowrap;left:2428.00px;">2</div>
<svg style="position:absolute;left:0.00px;top:0.00px;z-index:30;pointer-events:none;" width="2516" height="1573" viewBox="0 0 2516 1573"><circle cx="2450.4" cy="1508.6" r="50" fill="#000" fill-opacity="0.07"/><circle cx="2450" cy="1507.6" r="49.6" fill="#000" fill-opacity="0.08"/><circle cx="2402.3" cy="1476.2" r="24.1" fill="#3680b5" stroke="#639ec6" stroke-width="3.4"/><circle cx="2449.5" cy="1506" r="48.7" fill="#3680b5"/><text x="2404.2" y="1485.4" text-anchor="middle" font-family="Liberation Sans, sans-serif" font-size="26" fill="#fff">6</text><path d="M2437.3,1496 C2437.7,1489.4 2442.6,1485.3 2449.7,1485.3 C2457,1485.3 2462.3,1489.5 2462.3,1495.6 C2462.3,1504.8 2449.2,1506.2 2448.9,1517.6" fill="none" stroke="#fff" stroke-width="8.8" stroke-linecap="round"/><circle cx="2449" cy="1528.2" r="5.4" fill="#fff"/></svg>
</div></body></html>
